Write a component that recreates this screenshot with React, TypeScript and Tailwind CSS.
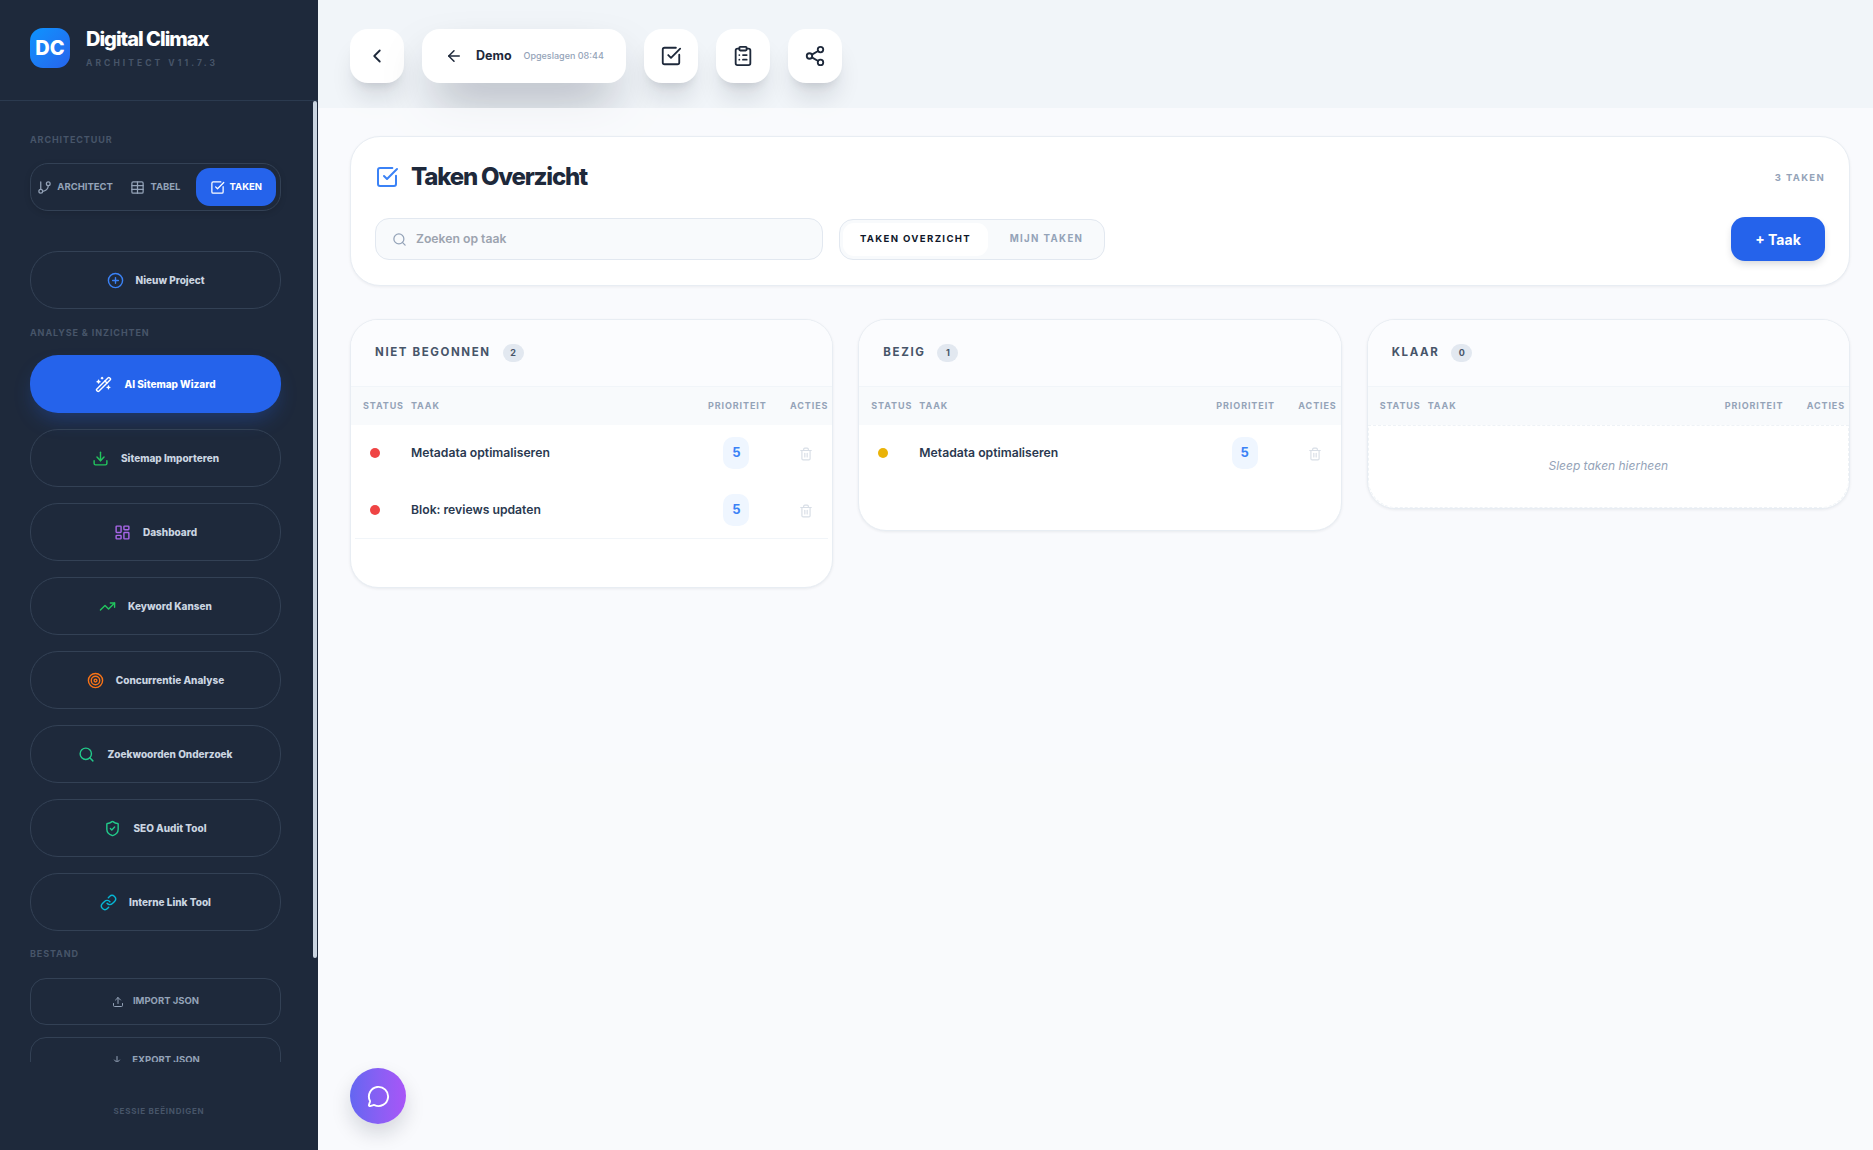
import React from 'react';
import {
  ArrowLeft,
  ChevronLeft,
  CirclePlus,
  ClipboardList,
  Download,
  GitBranch,
  LayoutDashboard,
  Link,
  MessageCircle,
  Search,
  Share2,
  ShieldCheck,
  SquareCheckBig,
  Table,
  Target,
  Trash2,
  TrendingUp,
  Upload,
  WandSparkles,
} from 'lucide-react';

const navItems = [
  { label: 'Sitemap Importeren', icon: Download, color: 'text-[#22c55e]' },
  { label: 'Dashboard', icon: LayoutDashboard, color: 'text-[#a866e8]' },
  { label: 'Keyword Kansen', icon: TrendingUp, color: 'text-[#22c55e]' },
  { label: 'Concurrentie Analyse', icon: Target, color: 'text-[#f97316]' },
  { label: 'Zoekwoorden Onderzoek', icon: Search, color: 'text-[#22c98a]' },
  { label: 'SEO Audit Tool', icon: ShieldCheck, color: 'text-[#22c98a]' },
  { label: 'Interne Link Tool', icon: Link, color: 'text-[#06b6d4]' },
];

const columns = [
  {
    title: 'Niet begonnen',
    tasks: [
      { name: 'Metadata optimaliseren', dot: 'bg-[#ef4444]', divider: false },
      { name: 'Blok: reviews updaten', dot: 'bg-[#ef4444]', divider: true },
    ],
  },
  {
    title: 'Bezig',
    tasks: [{ name: 'Metadata optimaliseren', dot: 'bg-[#eab308]', divider: false }],
  },
  { title: 'Klaar', tasks: [] },
];

const tableGrid = 'grid grid-cols-[60px_1fr_60px_65px] items-center';
const topButton =
  'w-[54px] h-[54px] rounded-[18px] bg-white flex items-center justify-center text-[#1e293b] shadow-[0_20px_25px_-5px_rgba(15,23,42,0.12),0_8px_10px_-6px_rgba(15,23,42,0.12)]';

const SectionLabel = ({ children, className = '' }: { children: React.ReactNode; className?: string }) => (
  <div className={`h-[12px] leading-[12px] text-[9px] font-bold tracking-[0.1em] text-[#475569] uppercase ${className}`}>
    {children}
  </div>
);

const Sidebar = () => (
  <aside className="w-[318px] shrink-0 h-screen flex flex-col bg-[#1e293b]">
    <div className="h-[101px] shrink-0 border-b border-[#2b3a4f] pl-[30px] pt-[28px] flex gap-[16px]">
      <div className="w-[40px] h-[40px] rounded-[13px] bg-gradient-to-br from-[#0a94ff] to-[#2563eb] flex items-center justify-center text-white text-[20px] font-extrabold">
        DC
      </div>
      <div>
        <div className="text-white text-[20px] leading-[24px] font-extrabold tracking-[-0.05em] mt-[-1px]">Digital Climax</div>
        <div className="text-[#475569] text-[8.5px] leading-[10px] font-bold tracking-[0.36em] mt-[7px]">ARCHITECT V11.7.3</div>
      </div>
    </div>

    <div className="relative flex-1 min-h-0 overflow-hidden">
      <div className="pl-[30px] pr-[37px] pt-[33px]">
        <SectionLabel>Architectuur</SectionLabel>
        <div className="mt-[17px] h-[48px] rounded-[18px] border border-[#334155] p-[4px] grid grid-cols-3 shadow-[0_2px_6px_rgba(0,0,0,0.12)]">
          <div className="flex items-center justify-center gap-[5px] text-[#94a3b8] text-[9.5px] font-bold">
            <GitBranch size={15} />
            ARCHITECT
          </div>
          <div className="flex items-center justify-center gap-[5px] text-[#94a3b8] text-[9.5px] font-bold">
            <Table size={15} />
            TABEL
          </div>
          <div className="flex items-center justify-center gap-[5px] rounded-[14px] bg-[#2563eb] text-white text-[9.5px] font-bold">
            <SquareCheckBig size={15} />
            TAKEN
          </div>
        </div>

        <button className="mt-[40px] w-full h-[58px] rounded-[28px] border border-[#334155] flex items-center justify-center gap-[12px] text-[#cbd5e1] text-[10px] font-extrabold">
          <CirclePlus size={17} className="text-[#3b82f6]" />
          Nieuw Project
        </button>

        <SectionLabel className="mt-[18px]">Analyse &amp; Inzichten</SectionLabel>

        <div className="mt-[16px] flex flex-col gap-[16px]">
          <button className="w-full h-[58px] rounded-[28px] bg-[#2563eb] flex items-center justify-center gap-[12px] text-white text-[10px] font-extrabold shadow-[0_10px_20px_-4px_rgba(37,99,235,0.3)]">
            <WandSparkles size={17} />
            AI Sitemap Wizard
          </button>
          {navItems.map(item => (
            <button
              key={item.label}
              className="w-full h-[58px] rounded-[28px] border border-[#334155] flex items-center justify-center gap-[12px] text-[#cbd5e1] text-[10px] font-extrabold"
            >
              <item.icon size={17} className={item.color} />
              {item.label}
            </button>
          ))}
        </div>

        <SectionLabel className="mt-[17px]">Bestand</SectionLabel>

        <button className="mt-[18px] w-full h-[47px] rounded-[16px] border border-[#334155] flex items-center justify-center gap-[9px] text-[#94a3b8] text-[9.5px] font-bold">
          <Upload size={12} />
          IMPORT JSON
        </button>
        <button className="mt-[12px] w-full h-[47px] rounded-[16px] border border-[#334155] flex items-center justify-center gap-[9px] text-[#94a3b8] text-[9.5px] font-bold">
          <Download size={12} />
          EXPORT JSON
        </button>
      </div>
      {/* scrollbar thumb */}
      <div className="absolute right-[1px] top-0 w-[4px] h-[857px] rounded-full bg-[#cbd5e1]" />
    </div>

    <div className="h-[88px] shrink-0 flex items-start justify-center pt-[43px]">
      <span className="text-[#475569] text-[8px] leading-[12px] font-bold tracking-[0.095em]">SESSIE BEËINDIGEN</span>
    </div>
  </aside>
);

const TopBar = () => (
  <div className="h-[108px] shrink-0 bg-[#f1f5f9] pl-[32px] pt-[29px] flex items-start gap-[18px]">
    <button className={topButton}>
      <ChevronLeft size={22} />
    </button>
    <div className="w-[204px] h-[54px] rounded-[18px] bg-white flex items-center pl-[23px] shadow-[0_25px_50px_-12px_rgba(15,23,42,0.4)]">
      <ArrowLeft size={18} className="text-[#1e293b]" />
      <span className="ml-[13px] text-[12.5px] font-bold text-[#1e293b]">Demo</span>
      <span className="ml-[12px] text-[9px] font-medium text-[#94a3b8]">Opgeslagen 08:44</span>
    </div>
    <button className={topButton}>
      <SquareCheckBig size={22} />
    </button>
    <button className={topButton}>
      <ClipboardList size={22} />
    </button>
    <button className={topButton}>
      <Share2 size={22} />
    </button>
  </div>
);

const OverviewCard = () => (
  <div className="rounded-[30px] border border-[#e8edf3] bg-white px-[24px] pt-[23px] pb-[24px] shadow-[0_1px_3px_rgba(15,23,42,0.06)]">
    <div className="h-[34px] flex items-center justify-between">
      <div className="flex items-center gap-[12px]">
        <SquareCheckBig size={24} className="text-[#3b82f6]" />
        <h1 className="text-[24px] font-extrabold tracking-[-0.05em] text-[#1e293b]">Taken Overzicht</h1>
      </div>
      <span className="text-[9.5px] font-bold tracking-[0.14em] text-[#94a3b8] mt-[2px]">3 TAKEN</span>
    </div>
    <div className="mt-[23px] flex items-center">
      <div className="w-[448px] h-[42px] rounded-[14px] border border-[#e2e8f0] bg-[#f8fafc] flex items-center pl-[16px] gap-[9px]">
        <Search size={15} className="text-[#94a3b8]" />
        <span className="text-[12.2px] font-semibold text-[#9ca3af] pt-[1px]">Zoeken op taak</span>
      </div>
      <div className="ml-[16px] w-[266px] h-[41px] rounded-[14px] border border-[#e2e8f0] bg-[#f8fafc] p-[3px] flex items-stretch">
        <div className="w-[145px] pt-[1px] rounded-[11px] bg-white flex items-center justify-center text-[9.6px] font-bold tracking-[0.14em] text-[#0f172a]">
          TAKEN OVERZICHT
        </div>
        <div className="flex-1 flex items-center justify-center pl-[4px] pt-[1px] text-[9.7px] font-bold tracking-[0.14em] text-[#94a3b8]">
          MIJN TAKEN
        </div>
      </div>
      <button className="ml-auto w-[94px] h-[44px] rounded-[14px] bg-[#2563eb] text-white text-[14px] font-bold shadow-[0_4px_8px_-2px_rgba(15,23,42,0.2)]">
        + Taak
      </button>
    </div>
  </div>
);

const TaskColumn = ({ title, tasks }: (typeof columns)[number]) => (
  <div className="rounded-[28px] border border-[#e8edf3] bg-white overflow-hidden shadow-[0_1px_3px_rgba(15,23,42,0.07)]">
    <div className="h-[67px] bg-[#fbfcfe] border-b border-[#f1f5f9] pl-[24px] flex items-center gap-[12px]">
      <span className="text-[11.5px] font-bold tracking-[0.14em] uppercase text-[#475569]">{title}</span>
      <span className="w-[21px] h-[18px] rounded-full bg-[#e2e8f0] flex items-center justify-center text-[9px] font-bold text-[#475569]">
        {tasks.length}
      </span>
    </div>
    <div className={`${tableGrid} h-[38px] bg-[#f8fafc] text-[9px] font-bold tracking-[0.1em] text-[#94a3b8]`}>
      <span className="pl-[12px]">STATUS</span>
      <span>TAAK</span>
      <span className="text-center">PRIORITEIT</span>
      <span className="text-right pr-[4px]">ACTIES</span>
    </div>
    {tasks.length === 0 ? (
      <div className="h-[83px] pb-[2px] rounded-b-[28px] border border-dashed border-[#eef2f6] flex items-center justify-center text-[12px] italic text-[#94a3b8]">
        Sleep taken hierheen
      </div>
    ) : (
      <div className="pb-[48px]">
        {tasks.map(task => (
          <div key={task.name} className={task.divider ? 'border-b border-[#f1f5f9] mx-[4px]' : 'mx-[4px] border-b border-transparent'}>
            <div className={`${tableGrid} h-[56px] mx-[-4px]`}>
              <span className={`ml-[19px] w-[10px] h-[10px] rounded-full ${task.dot}`} />
              <span className="text-[12.2px] font-semibold text-[#2a3950]">{task.name}</span>
              <span className="ml-[16px] w-[26px] h-[32px] rounded-[10px] bg-[#eff6ff] flex items-center justify-center text-[13px] font-bold text-[#3b82f6]">
                5
              </span>
              <span className="flex justify-end pr-[19px] pt-[1px]">
                <Trash2 size={14} className="text-[#d8dee6]" />
              </span>
            </div>
          </div>
        ))}
      </div>
    )}
  </div>
);

export default function App() {
  return (
    <div className="relative flex h-screen overflow-hidden bg-[#f8fafc] [font-family:Inter,sans-serif]">
      <Sidebar />
      <main className="flex-1 min-w-0 flex flex-col">
        <TopBar />
        {/* semi-opaque so the top bar's button shadows fade through */}
        <div className="relative flex-1 bg-[#f9fafc]/80 pl-[32px] pr-[23px] pt-[28px]">
          <OverviewCard />
          <div className="mt-[33px] grid grid-cols-3 gap-[25px] items-start">
            {columns.map(col => (
              <TaskColumn key={col.title} {...col} />
            ))}
          </div>
        </div>
      </main>
      <button className="absolute left-[350px] top-[1068px] w-[56px] h-[56px] rounded-full bg-gradient-to-r from-[#6366f1] to-[#a855f7] flex items-center justify-center text-white shadow-[0_10px_20px_rgba(15,23,42,0.15)]">
        <MessageCircle size={23} />
      </button>
    </div>
  );
}
